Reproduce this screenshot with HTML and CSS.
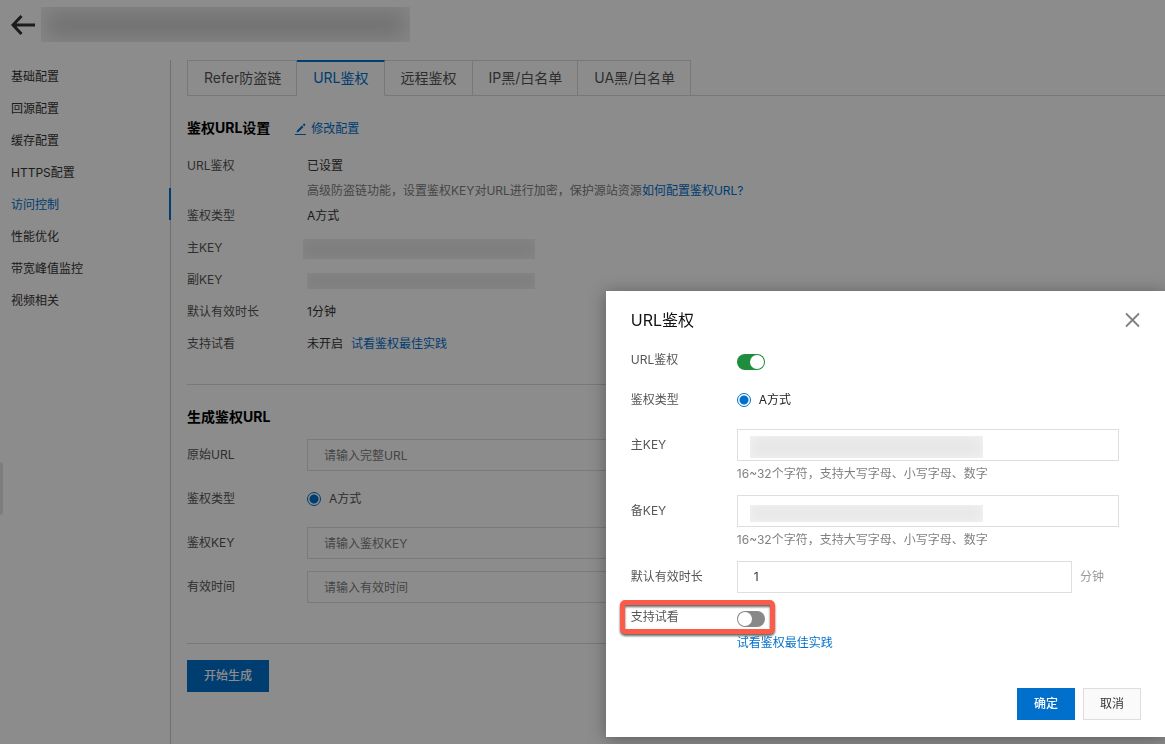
FILE: index.html
```html
<!DOCTYPE html>
<html lang="zh-CN">
<head>
<meta charset="utf-8">
<title>URL鉴权</title>
<link rel="stylesheet" href="styles.css">
</head>
<body>
<div class="page">
  <header class="page-header">
    <button class="icon-button back" type="button" aria-label="返回">
      <svg width="24" height="20" viewBox="0 0 24 20" fill="none" stroke="#333" stroke-width="3"><path d="M10.500 1 2 10l8.500 9M2 10h22"/></svg>
    </button>
    <span class="redacted redacted-title"></span>
  </header>
  <div class="layout">
    <nav class="sidebar">
      <a class="nav-item" href="#">基础配置</a>
      <a class="nav-item" href="#">回源配置</a>
      <a class="nav-item" href="#">缓存配置</a>
      <a class="nav-item" href="#">HTTPS配置</a>
      <a class="nav-item active" href="#">访问控制</a>
      <a class="nav-item" href="#">性能优化</a>
      <a class="nav-item" href="#">带宽峰值监控</a>
      <a class="nav-item" href="#">视频相关</a>
    </nav>
    <main class="content">
      <div class="tabs" role="tablist">
        <button class="tab" role="tab" type="button">Refer防盗链</button>
        <button class="tab active" role="tab" type="button" aria-selected="true">URL鉴权</button>
        <button class="tab" role="tab" type="button">远程鉴权</button>
        <button class="tab" role="tab" type="button">IP黑/白名单</button>
        <button class="tab" role="tab" type="button">UA黑/白名单</button>
      </div>
      <section class="panel">
        <div class="panel-head">
          <h2>鉴权URL设置</h2>
          <a class="link edit" href="#">
            <svg width="12" height="12" viewBox="0 0 12 12" fill="#0070cc"><path d="M0 11h11v1H0zM1.500 9.500 2 7.500l5-5 1.500 1.500-5 5zM7.700 1.800 8.700.8q.5-.5 1 0l.5.5q.5.5 0 1l-1 1z"/></svg>
            修改配置
          </a>
        </div>
        <dl class="details">
          <dt>URL鉴权</dt>
          <dd>已设置<p class="hint">高级防盗链功能，设置鉴权KEY对URL进行加密，保护源站资源<a class="link" href="#">如何配置鉴权URL?</a></p></dd>
          <dt>鉴权类型</dt><dd>A方式</dd>
          <dt>主KEY</dt><dd class="secret"><span class="redacted redacted-key"></span></dd>
          <dt>副KEY</dt><dd class="secret"><span class="redacted redacted-key short"></span></dd>
          <dt>默认有效时长</dt><dd>1分钟</dd>
          <dt>支持试看</dt><dd>未开启<a class="link practice" href="#">试看鉴权最佳实践</a></dd>
        </dl>
      </section>
      <form class="panel generator">
        <h2>生成鉴权URL</h2>
        <div class="fields">
          <label for="origin-url">原始URL</label>
          <input class="text-input" id="origin-url" type="text" placeholder="请输入完整URL">
          <span>鉴权类型</span>
          <label class="radio"><input type="radio" name="gen-type" checked>A方式</label>
          <label for="auth-key">鉴权KEY</label>
          <input class="text-input" id="auth-key" type="text" placeholder="请输入鉴权KEY">
          <label for="valid-time">有效时间</label>
          <input class="text-input" id="valid-time" type="text" placeholder="请输入有效时间">
        </div>
      </form>
      <div class="actions"><button class="button primary" type="button">开始生成</button></div>
    </main>
  </div>
  <span class="drawer-handle"></span>
</div>
<div class="backdrop"></div>
<div class="dialog" role="dialog" aria-labelledby="dialog-title">
  <header class="dialog-head">
    <h1 id="dialog-title">URL鉴权</h1>
    <button class="icon-button" type="button" aria-label="关闭">
      <svg width="16" height="16" viewBox="0 0 16 16" fill="none" stroke="#808080" stroke-width="1.800"><path d="m1 1.500 13 13m0-13-13 13"/></svg>
    </button>
  </header>
  <form class="dialog-form">
    <div class="row row-switch">
      <label for="auth-on">URL鉴权</label>
      <input class="switch" id="auth-on" type="checkbox" role="switch" checked>
    </div>
    <div class="row row-radio">
      <span>鉴权类型</span>
      <label class="radio"><input type="radio" name="type" checked>A方式</label>
    </div>
    <div class="row row-key">
      <label for="main-key">主KEY</label>
      <div class="control">
        <input class="text-input" id="main-key" type="text">
        <span class="redacted mask"></span>
        <p class="help">16~32个字符，支持大写字母、小写字母、数字</p>
      </div>
    </div>
    <div class="row row-key">
      <label for="backup-key">备KEY</label>
      <div class="control">
        <input class="text-input" id="backup-key" type="text">
        <span class="redacted mask low"></span>
        <p class="help">16~32个字符，支持大写字母、小写字母、数字</p>
      </div>
    </div>
    <div class="row">
      <label for="duration">默认有效时长</label>
      <div class="with-unit">
        <input class="text-input" id="duration" type="text" value="1">
        <span class="unit">分钟</span>
      </div>
    </div>
    <div class="row row-preview">
      <label for="preview-on">支持试看</label>
      <div class="control">
        <input class="switch" id="preview-on" type="checkbox" role="switch">
        <a class="link" href="#">试看鉴权最佳实践</a>
      </div>
      <span class="highlight"></span>
    </div>
  </form>
  <footer class="dialog-foot">
    <button class="button primary" type="button">确定</button>
    <button class="button" type="button">取消</button>
  </footer>
</div>
</body>
</html>
```
FILE: styles.css
```css
* { box-sizing: border-box; }

body {
  margin: 0;
  background: #fff;
  color: #333;
  font: 12px/18px Inter, "Noto Sans CJK SC", sans-serif;
}

h1, h2, p, dl, dd { margin: 0; }
a { color: inherit; text-decoration: none; }
button, input { font: inherit; color: inherit; }
.link { color: #0070cc; }

.page {
  display: flex;
  flex-direction: column;
  min-height: 100vh;
}
.page-header {
  display: flex;
  align-items: flex-start;
  gap: 6px;
  height: 60px;
  padding: 7px 11px;
}
.icon-button {
  display: flex;
  padding: 0;
  border: 0;
  background: none;
}
.back { padding-top: 8px; }

.redacted {
  display: block;
  background: #e7e7e7;
  box-shadow: inset 0 0 12px #f4f4f4;
}
.redacted-title {
  width: 369px;
  height: 35px;
  background: #cecece;
  box-shadow: inset 0 0 20px 5px #f4f4f4;
}

.layout {
  display: flex;
  flex: 1;
}
.sidebar {
  flex: none;
  width: 171px;
  border-right: 1px solid #ccc;
}
.nav-item {
  display: block;
  height: 32px;
  padding: 1px 0 0 11px;
  line-height: 32px;
}
.nav-item.active {
  margin-right: -1px;
  border-right: 2px solid #0070cc;
  color: #0070cc;
}

.content {
  flex: 1;
  min-width: 0;
  padding-left: 16px;
}
.tabs {
  display: flex;
  height: 36px;
  box-shadow: inset 0 -1px #dadada;
}
.tab {
  padding: 0 15px 0 16px;
  border: 1px solid #dadada;
  border-left-width: 0;
  background: none;
  color: #555;
  font-size: 14px;
}
.tab:first-child { border-left-width: 1px; }
.tab.active {
  padding-bottom: 1px;
  border-top: 2px solid #0070cc;
  border-bottom-color: #fff;
  background: #fff;
  color: #0070cc;
}

.panel { border-bottom: 1px solid #dadada; }
.panel-head {
  display: flex;
  align-items: center;
  gap: 25px;
  padding: 22px 0 12px;
}
h2 {
  color: #000;
  font-size: 14px;
  line-height: 20px;
}
.edit {
  display: flex;
  align-items: center;
  gap: 4px;
  padding-top: 2px;
}
.details {
  display: grid;
  grid-template-columns: 120px 1fr;
  padding-bottom: 24px;
  line-height: 32px;
}
dt { color: #555; }
.hint {
  color: #808080;
  line-height: 18px;
}
.secret {
  display: flex;
  align-items: center;
  padding-top: 2px;
}
.redacted-key {
  width: 232px;
  height: 20px;
  margin-left: -4px;
}
.redacted-key.short {
  width: 228px;
  height: 16px;
  margin-left: 0;
}
.practice { margin-left: 8px; }

.generator { padding: 22px 0 40px; }
.fields {
  display: grid;
  grid-template-columns: 120px 1fr;
  gap: 12px 0;
  padding: 12px 0 0;
  color: #555;
  line-height: 32px;
}
.text-input {
  display: block;
  width: 100%;
  height: 32px;
  padding: 0 16px;
  border: 1px solid #dedede;
  background: #fff;
}
.fields .text-input { padding-top: 2px; }
.text-input::placeholder {
  color: #808080;
  opacity: 1;
}
.radio {
  display: flex;
  align-items: center;
  gap: 8px;
}
.radio input {
  appearance: none;
  width: 14px;
  height: 14px;
  margin: 0;
  border: 1px solid #0070cc;
  border-radius: 50%;
  background: radial-gradient(circle, #0070cc 4px, #fff 5px);
}
.actions { padding: 16px 0; }
.button {
  height: 32px;
  padding: 0 16px;
  border: 1px solid #dedede;
  background: #fafafa;
  white-space: nowrap;
}
.button.primary {
  border-color: #0070cc;
  background: #0070cc;
  color: #fff;
  font-weight: 500;
}

.drawer-handle {
  position: fixed;
  left: 0;
  top: 462px;
  width: 3px;
  height: 53px;
  border-radius: 0 3px 3px 0;
  background: #e4e4e4;
}
.backdrop {
  position: fixed;
  inset: 0;
  background: rgba(0, 0, 0, .45);
}

.dialog {
  position: fixed;
  right: 0;
  bottom: 7px;
  width: 48%;
  padding: 16px 24px 17px 25px;
  background: #fff;
  box-shadow: 0 2px 16px rgba(0, 0, 0, .35);
}
.dialog-head {
  display: flex;
  align-items: center;
  justify-content: space-between;
  height: 26px;
}
h1 {
  color: #111;
  font-size: 16px;
  font-weight: 400;
}
.dialog-form {
  display: flex;
  flex-direction: column;
  padding: 18px 22px 36px 0;
}
.row {
  position: relative;
  display: grid;
  grid-template-columns: 106px 1fr;
  margin-bottom: 6px;
  color: #555;
  line-height: 32px;
}
.row-switch, .row-preview { line-height: 18px; }
.row-switch { margin-bottom: 14px; }
.row-switch .switch { margin-top: 3px; }
.row-radio { margin-bottom: 13px; }
.row-radio .radio { color: #222; }
.row-key { margin-bottom: 8px; }
.row-preview {
  margin: 9px 0 0;
}
.control { position: relative; }
.help {
  padding: 4px 0;
  color: #808080;
  line-height: 18px;
}
.mask {
  position: absolute;
  left: 13px;
  top: 7px;
  width: 233px;
  height: 22px;
}
.mask.low {
  top: 10px;
  height: 17px;
}
.with-unit {
  display: flex;
  gap: 8px;
  color: #333;
}
.unit {
  flex: none;
  width: 39px;
  color: #999;
}
.switch {
  display: flex;
  appearance: none;
  width: 28px;
  height: 16px;
  margin: 0;
  padding: 1px;
  border-radius: 8px;
  background: #888;
}
.switch::before {
  content: "";
  width: 14px;
  height: 14px;
  border-radius: 50%;
  background: #fff;
}
.switch:checked {
  justify-content: flex-end;
  background: #1e8e3e;
}
.control .switch { margin: 3px 0 7px; }
.control .link { display: block; }
.highlight {
  position: absolute;
  left: -11px;
  top: -8px;
  width: 155px;
  height: 34px;
  border: 5px solid #fd5b4a;
  border-radius: 5px;
  filter: drop-shadow(0 2px 1px rgba(0, 0, 0, .6));
  pointer-events: none;
}
.dialog-foot {
  display: flex;
  justify-content: flex-end;
  gap: 8px;
}
```
